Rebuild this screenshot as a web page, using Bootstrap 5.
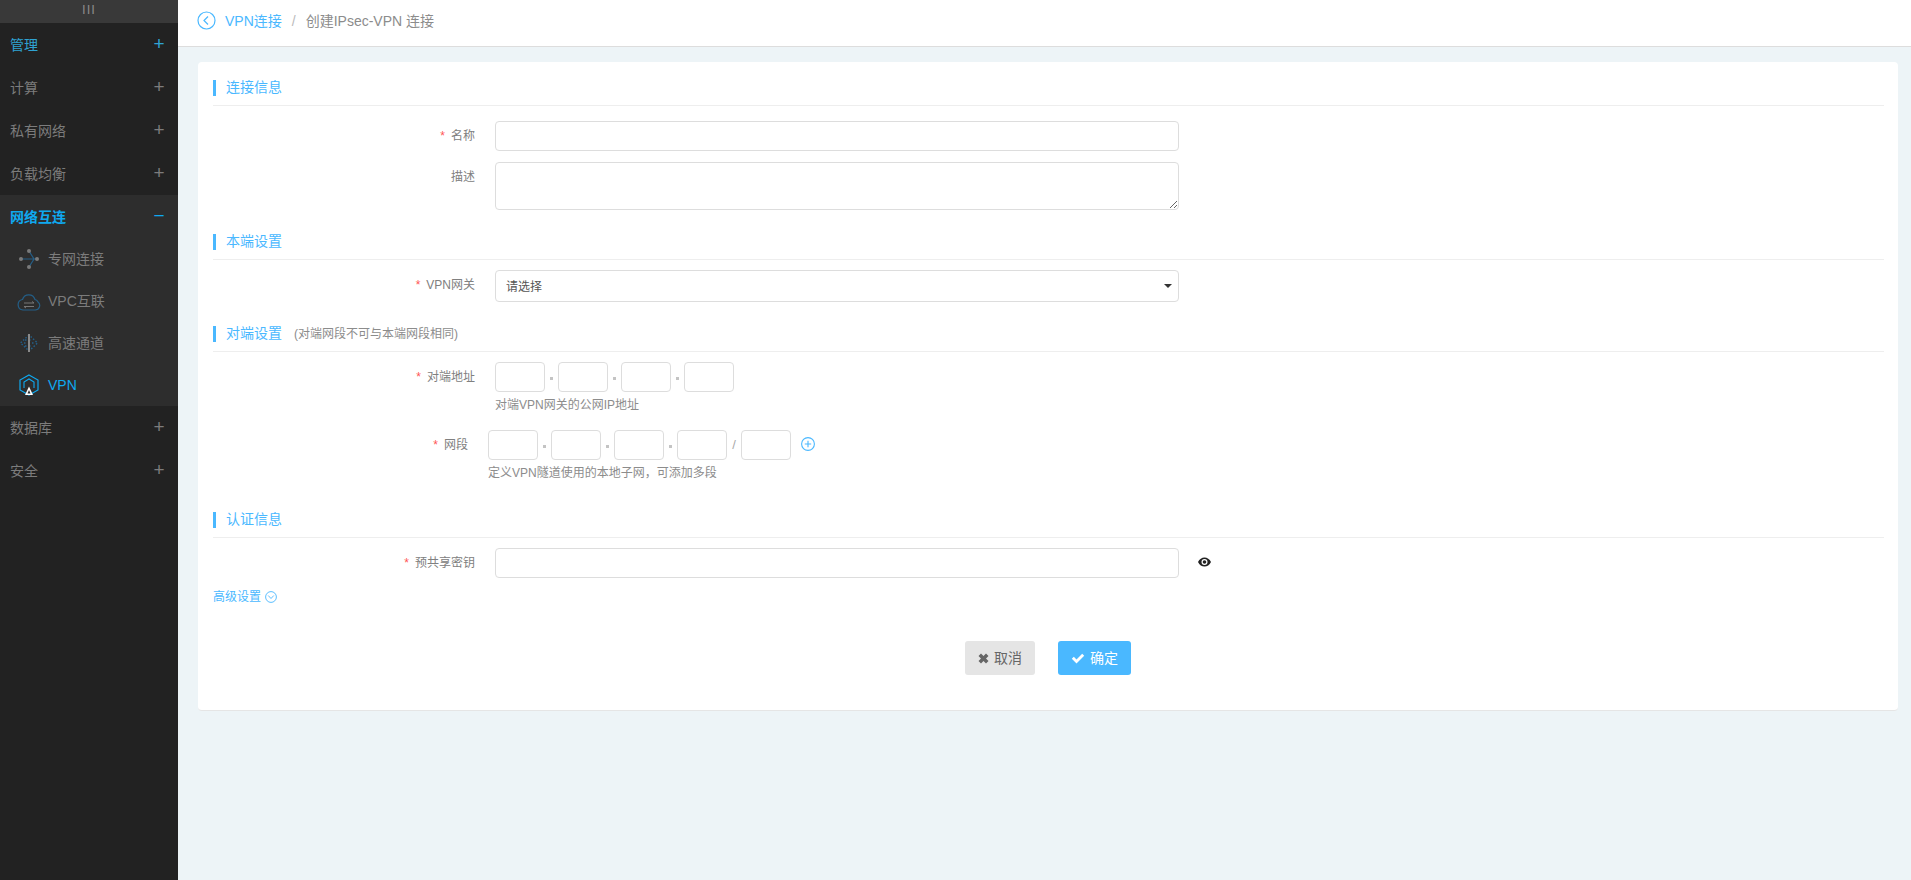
<!DOCTYPE html>
<html lang="zh-CN">

<head>
    <meta charset="UTF-8">
    <meta name="viewport" content="width=device-width, initial-scale=1.0">
    <link href="https://cdn.jsdelivr.net/npm/bootstrap@5.3.3/dist/css/bootstrap.min.css" rel="stylesheet">
    <title>创建IPsec-VPN 连接</title>

    <style>
        html, body {
            height: 100%;
        }

        body {
            font-family: "Liberation Sans", "Noto Sans CJK SC", sans-serif;
            font-size: 12px;
            color: #808080;
            background: #edf4f7;
        }

        .app-shell {
            min-height: 880px;
        }

        /* sidebar */
        .side-bar {
            width: 178px;
            flex: none;
            background: #222;
        }

        .side-handle {
            height: 23px;
            background: #393939;
            color: #8a8a8a;
            font-size: 13px;
            letter-spacing: 1px;
            padding-bottom: 3px;
        }

        .side-row {
            height: 43px;
            padding: 1px 10px 0;
            font-size: 14px;
            color: #7c7c7c;
        }

        .side-row .pm {
            width: 20px;
            margin-right: -1px;
            margin-top: -3px;
            text-align: center;
            font-size: 19px;
            line-height: 19px;
        }

        .side-row.is-blue {
            color: #2fa3d3;
        }

        .side-open {
            background: #2d2d2d;
        }

        .side-open .side-row {
            color: #0fa9f0;
            font-weight: 700;
        }

        .side-open .side-row .pm {
            font-weight: 400;
        }

        .side-sub {
            height: 42px;
            padding-left: 17px;
            gap: 7px;
            font-size: 14px;
            color: #7c7c7c;
        }

        .side-sub svg {
            width: 24px;
            height: 24px;
            flex: none;
        }

        .side-sub.is-on {
            color: #0fa9f0;
        }

        /* top bar */
        .top-bar {
            height: 47px;
            background: #fff;
            border-bottom: 1px solid #ddd;
            padding: 0 20px 3px 19px;
            gap: 9px;
            font-size: 14px;
        }

        .top-bar .breadcrumb {
            --bs-breadcrumb-margin-bottom: 0;
            --bs-breadcrumb-item-padding-x: 10px;
            --bs-breadcrumb-divider-color: #bbb;
            --bs-breadcrumb-item-active-color: #8c8c8c;
        }

        .top-bar a {
            color: #4ab8ff;
            text-decoration: none;
        }

        .back-ico {
            margin-top: -3px;
        }

        .page-body {
            padding: 15px 13px 0 20px;
        }

        .form-panel {
            background: #fff;
            border-radius: 4px;
            border-bottom: 1px solid #e5e5e5;
            padding: 0 14px 35px 15px;
        }

        /* section heading */
        .sec-head {
            margin-top: 24px;
            padding-bottom: 9px;
            border-bottom: 1px solid #eee;
        }

        .sec-head.first {
            margin-top: 0;
            padding-top: 18px;
        }

        .sec-head.wide-gap {
            margin-top: 30px;
        }

        .sec-head h6 {
            margin: 0;
            height: 16px;
            padding-left: 10px;
            border-left: 3px solid #4ab8ff;
            font-size: 14px;
            font-weight: 400;
            line-height: 14px;
            color: #4ab8ff;
        }

        .sec-head small {
            font-size: 12px;
            margin-left: 12px;
            color: #8c8c8c;
        }

        /* form rows */
        .f-row {
            margin-top: 11px;
        }

        .f-row.after-head {
            margin-top: 10px;
        }

        .f-row.top-row {
            margin-top: 15px;
        }

        .f-label {
            width: 262px;
            height: 30px;
            margin-right: 20px;
            flex: none;
            text-align: right;
            line-height: 31px;
        }

        .f-label.narrow {
            width: 255px;
        }

        .f-label i {
            font-style: normal;
            color: #f55;
            margin-right: 6px;
        }

        .f-wide {
            width: 684px;
        }

        .form-control.txt-in,
        .form-select.txt-in {
            height: 30px;
            min-height: 0;
            border: 1px solid #ddd;
            border-radius: 4px;
            box-shadow: none;
            font-size: 12px;
            color: #555;
        }

        textarea.form-control.txt-in {
            display: block;
            height: 48px;
            resize: both;
        }

        .form-select.txt-in {
            height: 32px;
            padding: 1px 10px 0;
            background-image: url("data:image/svg+xml,%3Csvg xmlns='http://www.w3.org/2000/svg' viewBox='0 0 8 4'%3E%3Cpath d='M0 0h8L4 4z' fill='%23333'/%3E%3C/svg%3E");
            background-size: 8px 4px;
            background-position: right 6px center;
        }

        .ip-box {
            width: 50px;
            flex: none;
        }

        .ip-sep {
            width: 13px;
            flex: none;
            align-self: center;
        }

        .ip-sep::before {
            content: "";
            display: block;
            width: 3px;
            height: 3px;
            margin: 2px auto 0;
            background: #c4c4c4;
        }

        .ip-sep.slash {
            width: 14px;
            font-size: 13px;
            line-height: 30px;
            text-align: center;
            color: #aaa;
        }

        .ip-sep.slash::before {
            display: none;
        }

        .f-help {
            margin-top: 4px;
            line-height: 18px;
            color: #8c8c8c;
        }

        .net-row {
            margin-top: 16px;
        }

        .add-btn {
            width: 14px;
            height: 14px;
            margin: 0 0 2px 10px;
            align-self: center;
        }

        .eye-btn {
            width: 13px;
            height: 10px;
            margin-left: 19px;
            margin-bottom: 3px;
            align-self: center;
        }

        .adv-link {
            margin-top: 10px;
            line-height: 18px;
            color: #4ab8ff;
            text-decoration: none;
            gap: 4px;
            width: 70px;
        }

        .btn-bar {
            margin-top: 35px;
            gap: 23px;
            padding-right: 1px;
        }

        .btn.act-btn {
            height: 34px;
            padding: 0;
            gap: 5px;
            border: 0;
            border-radius: 3px;
            font-size: 14px;
            white-space: nowrap;
        }

        .btn.act-cancel {
            width: 70px;
            background: #e5e5e5;
            color: #666;
        }

        .btn.act-ok {
            width: 73px;
            background: #4ab8ff;
            color: #fff;
        }
    </style>
</head>

<body>
    <div class="d-flex app-shell">
        <aside class="side-bar">
            <div class="side-handle d-flex align-items-center justify-content-center">III</div>
            <div class="side-row is-blue d-flex align-items-center justify-content-between"><span>管理</span><span class="pm">+</span></div>
            <div class="side-row d-flex align-items-center justify-content-between"><span>计算</span><span class="pm">+</span></div>
            <div class="side-row d-flex align-items-center justify-content-between"><span>私有网络</span><span class="pm">+</span></div>
            <div class="side-row d-flex align-items-center justify-content-between"><span>负载均衡</span><span class="pm">+</span></div>
            <div class="side-open">
                <div class="side-row d-flex align-items-center justify-content-between"><span>网络互连</span><span class="pm">−</span></div>
                <div class="side-sub d-flex align-items-center">
                    <svg viewBox="0 0 24 24" fill="none">
                        <path d="M4 12h16M12 4l5 8-5 8" stroke="#245f88" stroke-width="1.200"/>
                        <g fill="#7a7a7a"><circle cx="12" cy="4" r="2"/><circle cx="12" cy="20" r="2"/><circle cx="4" cy="12" r="2"/><circle cx="20" cy="12" r="2"/></g>
                    </svg>
                    <span>专网连接</span>
                </div>
                <div class="side-sub d-flex align-items-center">
                    <svg viewBox="0 0 24 24" fill="none">
                        <path d="M6 21h12a4.500 4.500 0 0 0 3-8 4 4 0 0 0-3-2.500 6.500 6.500 0 0 0-12.500 0A5.300 5.300 0 0 0 6 21z" stroke="#245f88" stroke-width="1.200"/>
                        <path d="M7 14h10l-2-1.500M17 17.500H7l2 1.500" stroke="#777" stroke-width="1"/>
                    </svg>
                    <span>VPC互联</span>
                </div>
                <div class="side-sub d-flex align-items-center">
                    <svg viewBox="0 0 24 24" fill="none">
                        <path d="M12 4L3.500 12 12 20 20.500 12z" stroke="#245f88" stroke-width="1.400" stroke-dasharray="1.500 1.800"/>
                        <path d="M7 12h10M8 9h8M8 15h8" stroke="#245f88" stroke-width="1.400" stroke-dasharray="1.500 2.500"/>
                        <path d="M12 3v18" stroke="#8a8a8a" stroke-width="2"/>
                    </svg>
                    <span>高速通道</span>
                </div>
                <div class="side-sub is-on d-flex align-items-center">
                    <svg viewBox="0 0 24 24" fill="none">
                        <path d="M12 2l9 5v10l-9 5-9-5V7z" stroke="#0fa9f0" stroke-width="1.200"/>
                        <path d="M7 15V9l5-3 5 3v6" stroke="#0fa9f0" stroke-width="1.100"/>
                        <path d="M12 13.500l4 8.500H8z" fill="#fff"/>
                        <path d="M12 17l1.500 3.500h-3z" fill="#2d2d2d"/>
                    </svg>
                    <span>VPN</span>
                </div>
            </div>
            <div class="side-row d-flex align-items-center justify-content-between"><span>数据库</span><span class="pm">+</span></div>
            <div class="side-row d-flex align-items-center justify-content-between"><span>安全</span><span class="pm">+</span></div>
        </aside>

        <main class="flex-grow-1">
            <div class="top-bar d-flex align-items-center">
                <svg class="back-ico" width="19" height="19" viewBox="0 0 19 19" fill="none" stroke="#4ab8ff" stroke-width="1.200">
                    <circle cx="9.500" cy="9.500" r="8.500"/>
                    <path d="M11 5.500L7 9.500l4 4"/>
                </svg>
                <nav aria-label="breadcrumb">
                    <ol class="breadcrumb">
                        <li class="breadcrumb-item"><a href="#">VPN连接</a></li>
                        <li class="breadcrumb-item active" aria-current="page">创建IPsec-VPN 连接</li>
                    </ol>
                </nav>
            </div>

            <div class="page-body">
                <form class="form-panel">
                    <div class="sec-head first"><h6>连接信息</h6></div>
                    <div class="f-row top-row d-flex">
                        <label class="f-label"><i>*</i>名称</label>
                        <input type="text" class="form-control txt-in f-wide">
                    </div>
                    <div class="f-row d-flex">
                        <label class="f-label">描述</label>
                        <textarea class="form-control txt-in f-wide"></textarea>
                    </div>

                    <div class="sec-head"><h6>本端设置</h6></div>
                    <div class="f-row after-head d-flex">
                        <label class="f-label"><i>*</i>VPN网关</label>
                        <select class="form-select txt-in f-wide">
                            <option>请选择</option>
                        </select>
                    </div>

                    <div class="sec-head"><h6>对端设置<small>(对端网段不可与本端网段相同)</small></h6></div>
                    <div class="f-row after-head d-flex">
                        <label class="f-label"><i>*</i>对端地址</label>
                        <div>
                            <div class="d-flex">
                                <input type="text" class="form-control txt-in ip-box">
                                <span class="ip-sep"></span>
                                <input type="text" class="form-control txt-in ip-box">
                                <span class="ip-sep"></span>
                                <input type="text" class="form-control txt-in ip-box">
                                <span class="ip-sep"></span>
                                <input type="text" class="form-control txt-in ip-box">
                            </div>
                            <div class="f-help">对端VPN网关的公网IP地址</div>
                        </div>
                    </div>
                    <div class="net-row d-flex">
                        <label class="f-label narrow"><i>*</i>网段</label>
                        <div>
                            <div class="d-flex">
                                <input type="text" class="form-control txt-in ip-box">
                                <span class="ip-sep"></span>
                                <input type="text" class="form-control txt-in ip-box">
                                <span class="ip-sep"></span>
                                <input type="text" class="form-control txt-in ip-box">
                                <span class="ip-sep"></span>
                                <input type="text" class="form-control txt-in ip-box">
                                <span class="ip-sep slash">/</span>
                                <input type="text" class="form-control txt-in ip-box">
                                <svg class="add-btn" viewBox="0 0 14 14" fill="none" stroke="#4ab8ff" stroke-width="1.100">
                                    <circle cx="7" cy="7" r="6.400"/>
                                    <path d="M7 3.800v6.400M3.800 7h6.400"/>
                                </svg>
                            </div>
                            <div class="f-help">定义VPN隧道使用的本地子网，可添加多段</div>
                        </div>
                    </div>

                    <div class="sec-head wide-gap"><h6>认证信息</h6></div>
                    <div class="f-row after-head d-flex">
                        <label class="f-label"><i>*</i>预共享密钥</label>
                        <input type="password" class="form-control txt-in f-wide">
                        <svg class="eye-btn" viewBox="0 0 13 10">
                            <path d="M0 5c1.500-3 3.800-4.500 6.500-4.500S11.500 2 13 5c-1.500 3-3.800 4.500-6.500 4.500S1.500 8 0 5z" fill="#222"/>
                            <circle cx="6.500" cy="5" r="3" fill="#fff"/>
                            <circle cx="6.500" cy="5" r="1.800" fill="#222"/>
                        </svg>
                    </div>
                    <a href="#" class="adv-link d-flex align-items-center">高级设置
                        <svg width="12" height="12" viewBox="0 0 12 12" fill="none" stroke="#4ab8ff" stroke-width="0.900">
                            <circle cx="6" cy="6" r="5.400"/>
                            <path d="M3.200 4.500L6 7.500l2.800-3"/>
                        </svg>
                    </a>
                    <div class="btn-bar d-flex justify-content-center">
                        <button type="button" class="btn act-btn act-cancel d-flex align-items-center justify-content-center">
                            <svg width="11" height="11" viewBox="0 0 11 11"><path d="M.5 3l2.500-2.500 2.500 2.500L8 .5 10.500 3 8 5.500 10.500 8 8 10.500 5.500 8 3 10.500.5 8 3 5.500z" fill="#666"/></svg>
                            <span>取消</span>
                        </button>
                        <button type="button" class="btn act-btn act-ok d-flex align-items-center justify-content-center">
                            <svg width="14" height="11" viewBox="0 0 14 11"><path d="M.8 5.800l2-2 2.700 2.700L11.200.8l2 2-7.700 7.700z" fill="#fff"/></svg>
                            <span>确定</span>
                        </button>
                    </div>
                </form>
            </div>
        </main>
    </div>

    <script src="https://cdn.jsdelivr.net/npm/bootstrap@5.3.3/dist/js/bootstrap.bundle.min.js"></script>
</body>

</html>
